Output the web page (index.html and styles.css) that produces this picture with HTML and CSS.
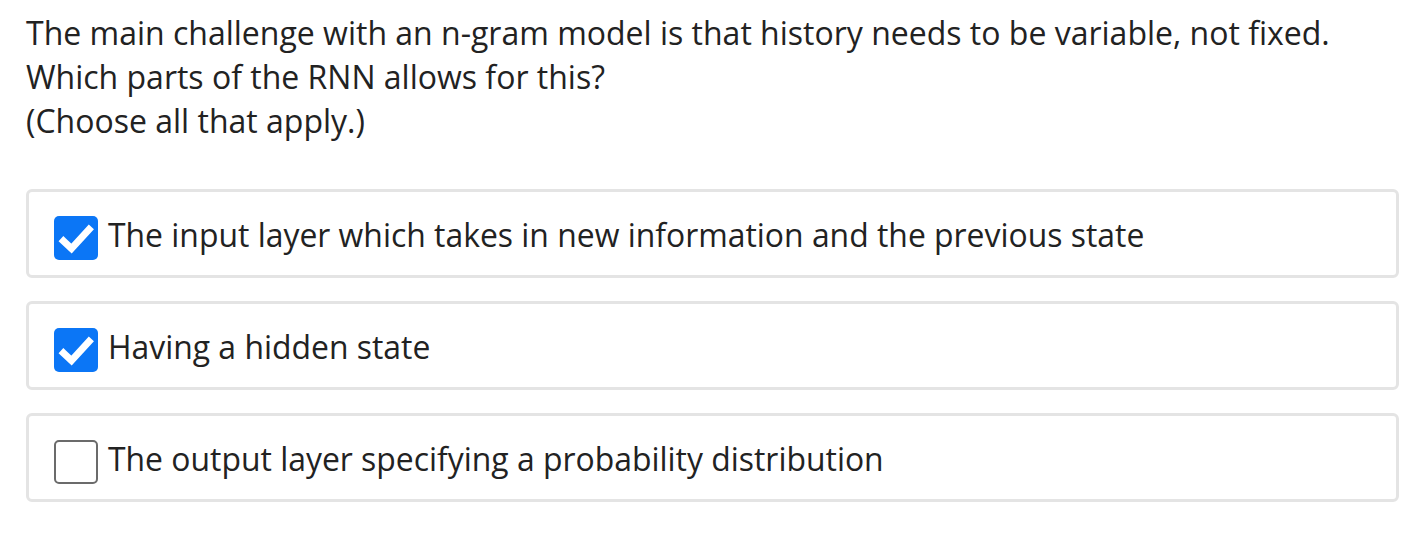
FILE: index.html
```html
<!DOCTYPE html>
<html>
<head>
<meta charset="utf-8">
<link rel="stylesheet" href="styles.css">
</head>
<body>
<div class="page">
  <div class="question">
    <p class="q-line">The main challenge with an n-gram model is that history needs to be variable, not fixed.</p>
    <p class="q-line">Which parts of the RNN allows for this?</p>
    <p class="q-line">(Choose all that apply.)</p>
  </div>
  <div class="options">
    <div class="option">
      <span class="box checked">
        <svg viewBox="0 0 44 44" width="44" height="44"><path d="M9.5 25 L17.5 32.5 L35 13.5" fill="none" stroke="#fff" stroke-width="7" stroke-linecap="square" stroke-linejoin="miter" stroke-miterlimit="2"/></svg>
      </span>
      <span class="label">The input layer which takes in new information and the previous state</span>
    </div>
    <div class="option">
      <span class="box checked">
        <svg viewBox="0 0 44 44" width="44" height="44"><path d="M9.5 25 L17.5 32.5 L35 13.5" fill="none" stroke="#fff" stroke-width="7" stroke-linecap="square" stroke-linejoin="miter" stroke-miterlimit="2"/></svg>
      </span>
      <span class="label">Having a hidden state</span>
    </div>
    <div class="option">
      <span class="box"></span>
      <span class="label">The output layer specifying a probability distribution</span>
    </div>
  </div>
</div>
</body>
</html>
```
FILE: styles.css
```css
html, body {
  margin: 0;
  padding: 0;
  background: #fff;
}
.page {
  padding: 11px 17px 0 26px;
  font-family: "Open Sans", sans-serif;
  color: #222;
}
.question {
  font-size: 32px;
  line-height: 44px;
}
.q-line {
  margin: 0;
}
.options {
  margin-top: 46px;
  display: flex;
  flex-direction: column;
  gap: 23px;
}
.option {
  height: 83px;
  box-sizing: content-box;
  border: 3px solid #e4e4e4;
  border-radius: 6px;
  display: flex;
  align-items: center;
  padding: 0 0 0 25px;
}
.box {
  width: 44px;
  height: 44px;
  box-sizing: border-box;
  border: 2px solid #6b6b6b;
  border-radius: 5px;
  flex: none;
  margin-top: 9px;
  display: flex;
  align-items: center;
  justify-content: center;
}
.box.checked {
  background: #0b76f6;
  border: none;
}
.label {
  margin-left: 10px;
  font-size: 31.9px;
  line-height: 44px;
  margin-top: 2px;
}
```
